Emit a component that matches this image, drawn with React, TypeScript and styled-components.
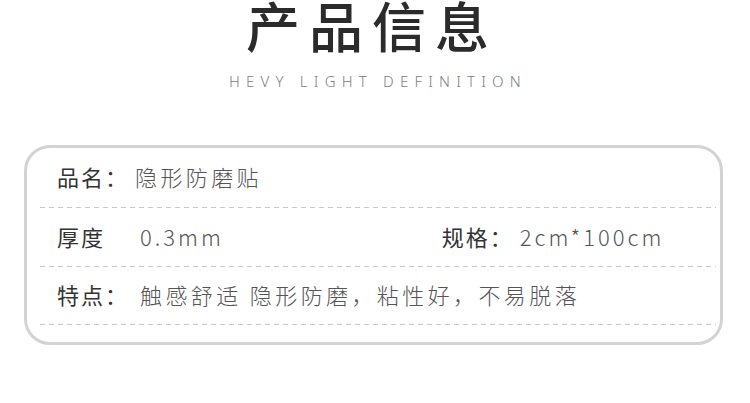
import React from 'react';
import styled, { createGlobalStyle } from 'styled-components';

const GlobalStyle = createGlobalStyle`
  html, body {
    margin: 0;
    padding: 0;
    background: #ffffff;
  }
  body {
    font-family: "Noto Sans", "Noto Sans CJK SC", sans-serif;
  }
`;

const Page = styled.div`
  width: 750px;
  height: 403px;
  overflow: hidden;
  background: #ffffff;
`;

const Header = styled.div`
  display: flex;
  flex-direction: column;
  align-items: center;
`;

const Title = styled.h1`
  margin: 0;
  font-family: "Noto Sans CJK SC", sans-serif;
  font-size: 54px;
  font-weight: 500;
  line-height: 50px;
  letter-spacing: 9px;
  color: #2b2b2b;
  padding-right: 6px;
`;

const Subtitle = styled.div`
  margin-top: 21px;
  font-family: "Noto Sans", sans-serif;
  font-size: 15px;
  font-weight: 300;
  letter-spacing: 6.2px;
  color: #808080;
  line-height: 20px;
  padding-left: 6px;
`;

const Card = styled.div`
  margin: 54px 27px 0 24px;
  border: 3px solid #d3d3d3;
  border-radius: 26px;
  padding: 0 4px 17px 13px;
`;

const Row = styled.div<{ $height: number }>`
  height: ${(p) => p.$height}px;
  box-sizing: border-box;
  display: flex;
  align-items: center;
  padding: 0 0 4px 17px;
  background: repeating-linear-gradient(to right, #c9c9c9 0 5px, transparent 5px 9px) left bottom / 100% 1px no-repeat;
`;

const Field = styled.div<{ $push?: number }>`
  display: flex;
  align-items: center;
  margin-left: ${(p) => p.$push ?? 0}px;
`;

const Label = styled.span<{ $width: number }>`
  width: ${(p) => p.$width}px;
  flex-shrink: 0;
  font-family: "Noto Sans CJK SC", sans-serif;
  font-size: 22px;
  font-weight: 400;
  letter-spacing: 2px;
  color: #333333;
`;

const Value = styled.span<{ $spacing?: number }>`
  font-family: "Noto Sans CJK SC", sans-serif;
  font-size: 22px;
  font-weight: 300;
  letter-spacing: ${(p) => p.$spacing ?? 3.4}px;
  color: #555555;
  white-space: nowrap;
`;

export default function App() {
  return (
    <Page>
      <GlobalStyle />
      <Header>
        <Title>产品信息</Title>
        <Subtitle>HEVY LIGHT DEFINITION</Subtitle>
      </Header>
      <Card>
        <Row $height={60}>
          <Field>
            <Label $width={78}>品名：</Label>
            <Value>隐形防磨贴</Value>
          </Field>
        </Row>
        <Row $height={59}>
          <Field>
            <Label $width={83}>厚度</Label>
            <Value $spacing={3}>0.3mm</Value>
          </Field>
          <Field $push={218}>
            <Label $width={78}>规格：</Label>
            <Value $spacing={3}>2cm*100cm</Value>
          </Field>
        </Row>
        <Row $height={58}>
          <Field>
            <Label $width={83}>特点：</Label>
            <Value>触感舒适 隐形防磨，粘性好，不易脱落</Value>
          </Field>
        </Row>
      </Card>
    </Page>
  );
}
